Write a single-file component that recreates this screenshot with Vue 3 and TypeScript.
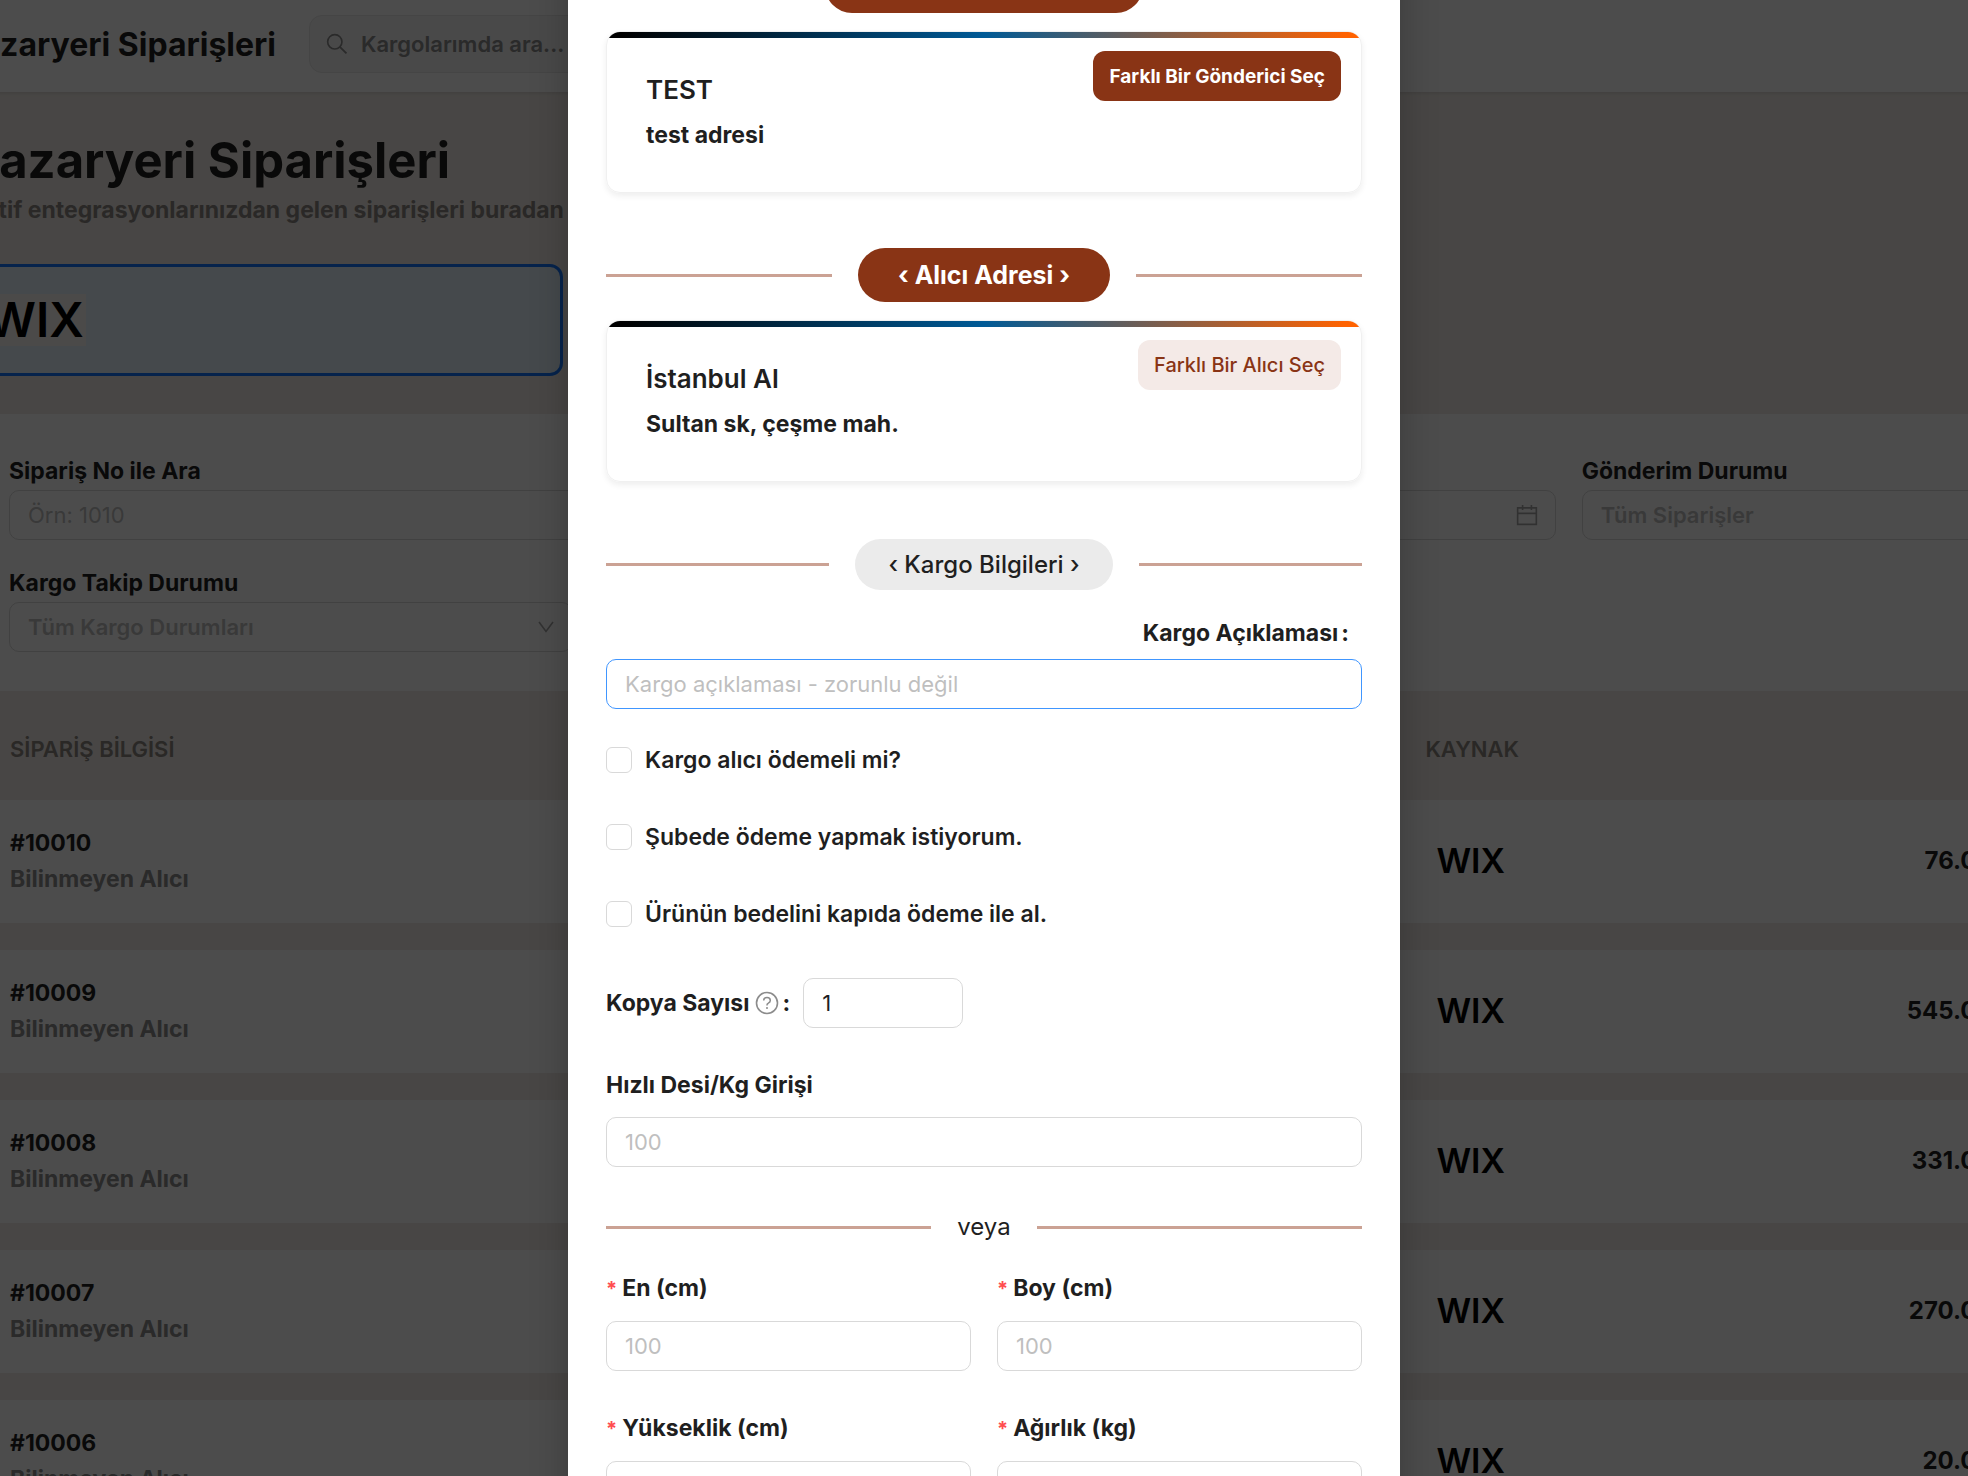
<script setup lang="ts">
import { reactive } from 'vue'

interface Order {
  no: string
  buyer: string
  total: string
}

interface Party {
  heading: string
  name: string
  address: string
  action: string
  tone: 'solid' | 'soft'
}

const orders: Order[] = [
  { no: '#10010', buyer: 'Bilinmeyen Alıcı', total: '76.00 TL' },
  { no: '#10009', buyer: 'Bilinmeyen Alıcı', total: '545.00 TL' },
  { no: '#10008', buyer: 'Bilinmeyen Alıcı', total: '331.00 TL' },
  { no: '#10007', buyer: 'Bilinmeyen Alıcı', total: '270.00 TL' },
  { no: '#10006', buyer: 'Bilinmeyen Alıcı', total: '20.00 TL' },
]

const parties: Party[] = [
  { heading: 'Gönderici Adresi', name: 'TEST', address: 'test adresi', action: 'Farklı Bir Gönderici Seç', tone: 'solid' },
  { heading: 'Alıcı Adresi', name: 'İstanbul Al', address: 'Sultan sk, çeşme mah.', action: 'Farklı Bir Alıcı Seç', tone: 'soft' },
]

const options = [
  { id: 'buyer-pays', label: 'Kargo alıcı ödemeli mi?' },
  { id: 'branch-pays', label: 'Şubede ödeme yapmak istiyorum.' },
  { id: 'cash-on-delivery', label: 'Ürünün bedelini kapıda ödeme ile al.' },
]

const sizes = [
  { id: 'width', label: 'En (cm)' },
  { id: 'length', label: 'Boy (cm)' },
  { id: 'height', label: 'Yükseklik (cm)' },
  { id: 'weight', label: 'Ağırlık (kg)' },
]

const form = reactive({
  note: '',
  checked: [] as string[],
  copies: '1',
  desi: '',
  size: { width: '', length: '', height: '', weight: '' } as Record<string, string>,
})
</script>

<template>
  <div class="screen">
    <div class="page">
      <header class="topbar">
        <div class="topbar-title">Pazaryeri Siparişleri</div>
        <label class="search">
          <svg viewBox="0 0 20 20" width="22" height="22" aria-hidden="true">
            <circle cx="8" cy="8" r="6.5" fill="none" stroke="currentColor" stroke-width="1.5" />
            <path d="M12.8 12.8 18.6 18.6" fill="none" stroke="currentColor" stroke-width="1.7" />
          </svg>
          <input type="search" placeholder="Kargolarımda ara..." aria-label="Kargolarımda ara" />
        </label>
      </header>

      <section class="intro">
        <h1>Pazaryeri Siparişleri</h1>
        <p>Aktif entegrasyonlarınızdan gelen siparişleri buradan yönetebilirsiniz.</p>
        <button type="button" class="market"><span class="wix wix-large">WIX</span></button>
      </section>

      <section class="filters">
        <div class="filter">
          <label for="f-no">Sipariş No ile Ara</label>
          <input id="f-no" type="text" placeholder="Örn: 1010" />
        </div>
        <div class="filter">
          <label for="f-date">Tarih Aralığı</label>
          <div class="date">
            <input id="f-date" type="text" />
            <svg viewBox="0 0 20 20" width="22" height="22" aria-hidden="true">
              <path d="M1.5 3.5h17v15h-17zM1.5 8.5h17M6 1v4.500M14 1v4.500" fill="none" stroke="currentColor" stroke-width="1.5" />
            </svg>
          </div>
        </div>
        <div class="filter">
          <label for="f-ship">Gönderim Durumu</label>
          <div class="select">
            <select id="f-ship"><option>Tüm Siparişler</option></select>
          </div>
        </div>
        <div class="filter narrow">
          <label for="f-track">Kargo Takip Durumu</label>
          <div class="select">
            <select id="f-track"><option>Tüm Kargo Durumları</option></select>
            <svg viewBox="0 0 16 12" width="16" height="12" aria-hidden="true">
              <path d="M1 1l7 9.500L15 1" fill="none" stroke="currentColor" stroke-width="1.600" />
            </svg>
          </div>
        </div>
      </section>

      <table class="orders">
        <colgroup>
          <col class="col-info" />
          <col class="col-source" />
          <col class="col-total" />
          <col />
        </colgroup>
        <thead>
          <tr>
            <th scope="col" class="info">SİPARİŞ BİLGİSİ</th>
            <th scope="col">KAYNAK</th>
            <td></td>
            <td></td>
          </tr>
        </thead>
        <tbody>
          <tr v-for="order in orders" :key="order.no">
            <td class="info">
              <div class="order-no">{{ order.no }}</div>
              <div class="order-buyer">{{ order.buyer }}</div>
            </td>
            <td class="source"><span class="wix">WIX</span></td>
            <td class="total">{{ order.total }}</td>
            <td></td>
          </tr>
        </tbody>
      </table>
    </div>

    <div class="mask">
      <form class="modal" role="dialog" aria-label="Kargo Oluştur" @submit.prevent>
        <template v-for="party in parties" :key="party.heading">
          <div class="divider">
            <h2 class="pill pill-brand">‹ {{ party.heading }} ›</h2>
          </div>
          <article class="card">
            <div class="card-bar"></div>
            <div class="card-body">
              <div class="card-text">
                <h3>{{ party.name }}</h3>
                <p>{{ party.address }}</p>
              </div>
              <button type="button" class="pick" :class="party.tone">{{ party.action }}</button>
            </div>
          </article>
        </template>

        <div class="divider cargo">
          <h2 class="pill pill-plain">‹ Kargo Bilgileri ›</h2>
        </div>

        <div class="note">
          <label class="label" for="note">Kargo Açıklaması<span class="colon">:</span></label>
          <input id="note" v-model="form.note" class="control active" type="text" placeholder="Kargo açıklaması - zorunlu değil" />
        </div>

        <div class="options">
          <label v-for="option in options" :key="option.id" class="option">
            <input v-model="form.checked" type="checkbox" :value="option.id" />
            <span>{{ option.label }}</span>
          </label>
        </div>

        <div class="copies">
          <label class="label" for="copies">Kopya Sayısı</label>
          <svg viewBox="0 0 24 24" width="24" height="24" aria-hidden="true">
            <circle cx="12" cy="12" r="10.500" fill="none" stroke="currentColor" stroke-width="1.600" />
            <path d="M8.700 9.600c0-1.800 1.400-3 3.300-3s3.300 1.200 3.300 2.900c0 1.500-1 2.200-2 2.700-.900.400-1.300.9-1.300 1.700v.6" fill="none" stroke="currentColor" stroke-width="1.500" />
            <circle cx="12" cy="17" r="1" fill="currentColor" />
          </svg>
          <span class="label">:</span>
          <input id="copies" v-model="form.copies" class="control" type="text" inputmode="numeric" />
        </div>

        <div class="field">
          <label class="label" for="desi">Hızlı Desi/Kg Girişi</label>
          <input id="desi" v-model="form.desi" class="control" type="text" placeholder="100" />
        </div>

        <div class="divider or"><span>veya</span></div>

        <div class="sizes">
          <div v-for="size in sizes" :key="size.id" class="field">
            <label class="label" :for="size.id"><span class="star">*</span>{{ size.label }}</label>
            <input :id="size.id" v-model="form.size[size.id]" class="control" type="text" placeholder="100" />
          </div>
        </div>
      </form>
    </div>
  </div>
</template>

<style>
body {
  margin: 0;
}
</style>

<style scoped>
.screen {
  position: relative;
  height: 100vh;
  overflow: hidden;
  background: #f1ece6;
  color: #1f1f1f;
  font-family: Inter, "Liberation Sans", sans-serif;
  font-size: 22px;
}

.screen *,
.screen *::before,
.screen *::after {
  box-sizing: border-box;
}

h1,
h2,
h3,
p {
  margin: 0;
}

input,
select,
button {
  font: inherit;
  color: inherit;
  margin: 0;
  outline: none;
}

/* The page behind the dialog is scrolled a little to the right. */
.page {
  width: 122%;
  margin-left: -32px;
}

.topbar {
  display: flex;
  align-items: center;
  height: 92px;
  padding-bottom: 4px;
  background: #ffffff;
  box-shadow: 0 1px 4px rgba(0, 0, 0, 0.12);
}

.topbar-title {
  display: flex;
  justify-content: flex-end;
  width: 308px;
  font-size: 32px;
  font-weight: 700;
  white-space: nowrap;
}

.search {
  display: flex;
  align-items: center;
  gap: 13px;
  width: 420px;
  height: 58px;
  margin-left: 33px;
  padding: 0 16px;
  border: 1px solid #e6e6e6;
  border-radius: 13px;
  background: #f5f5f5;
  color: #8c8c8c;
}

.search input {
  flex: 1;
  min-width: 0;
  padding: 0;
  border: 0;
  background: transparent;
  font-weight: 600;
}

.search input::placeholder {
  color: #8c8c8c;
}

.intro {
  height: 322px;
  padding: 37px 0 0;
}

h1 {
  font-size: 49px;
  font-weight: 700;
  line-height: 64px;
  white-space: nowrap;
}

.intro p {
  color: #8c8883;
  font-size: 23px;
  font-weight: 700;
  line-height: 34px;
  white-space: nowrap;
}

.market {
  display: flex;
  align-items: center;
  width: 595px;
  height: 112px;
  margin-top: 37px;
  padding: 0 0 0 14px;
  border: 3px solid #1677ff;
  border-radius: 13px;
  background: #e6f4ff;
}

.wix {
  color: #000000;
  font-size: 34px;
  font-weight: 600;
  line-height: 1;
}

.wix-large {
  padding: 2px;
  background: #faf7f4;
  font-size: 48px;
}

.filters {
  display: grid;
  grid-template-columns: repeat(3, 1fr);
  gap: 26px;
  padding: 40px 27px 39px 41px;
  background: #ffffff;
}

.filter {
  display: flex;
  flex-direction: column;
  gap: 2px;
}

.filter label {
  font-size: 23px;
  font-weight: 700;
  line-height: 34px;
}

.filter input,
.filter select {
  width: 100%;
  height: 50px;
  padding: 0 18px;
  border: 1px solid #d9d9d9;
  border-radius: 10px;
  background: transparent;
  appearance: none;
}

.filter input::placeholder {
  color: #bfbfbf;
}

.filter select {
  color: #bfbfbf;
  font-weight: 600;
}

.narrow {
  width: 563px;
}

.date,
.select {
  position: relative;
  display: flex;
}

.date svg,
.select svg {
  position: absolute;
  top: 50%;
  right: 18px;
  transform: translateY(-50%);
  color: #a6a6a6;
}

.orders {
  width: 100%;
  border-collapse: separate;
  border-spacing: 0 27px;
  table-layout: fixed;
}

.col-info {
  width: 60.7%;
}

.col-source {
  width: 13%;
}

.col-total {
  width: 12.1%;
}

.orders th {
  height: 55px;
  padding: 6px 0 0;
  color: #8c8680;
  font-weight: 600;
  text-align: left;
}

.orders th.info,
.orders td.info {
  padding-left: 42px;
}

.orders tbody td {
  height: 123px;
  padding: 0 0 2px;
  background: #ffffff;
}

.orders .order-no,
.orders .order-buyer {
  font-size: 23px;
  font-weight: 700;
  line-height: 36px;
}

.orders .order-buyer {
  color: #8c8c8c;
}

.orders tbody .source {
  padding-left: 11px;
}

.orders .total {
  font-size: 24px;
  font-weight: 700;
  text-align: right;
}

.mask {
  position: absolute;
  inset: 0;
  overflow: hidden;
  background: rgba(0, 0, 0, 0.7);
}

/* Dialog body, scrolled past its first heading. */
.modal {
  width: 832px;
  max-width: 100%;
  margin: -79px auto 0;
  padding: 38px;
  background: #ffffff;
  box-shadow: 0 0 36px rgba(0, 0, 0, 0.24);
}

.divider {
  display: flex;
  align-items: center;
  gap: 26px;
}

.divider::before,
.divider::after {
  content: "";
  flex: 1;
  height: 3px;
  background: #cba294;
}

.pill {
  border-radius: 27px;
  white-space: nowrap;
}

.pill-brand {
  padding: 0 40px;
  background: #893415;
  color: #ffffff;
  font-size: 25px;
  font-weight: 700;
  line-height: 54px;
}

.pill-plain {
  padding: 0 33px;
  background: #ebebeb;
  font-size: 24px;
  font-weight: 500;
  line-height: 51px;
}

.cargo {
  margin-top: 57px;
}

.card {
  margin: 18px 0 55px;
  overflow: hidden;
  border: 1px solid #f0f0f0;
  border-radius: 14px;
  box-shadow: 0 3px 6px rgba(0, 0, 0, 0.07);
}

.card-bar {
  height: 6px;
  background: linear-gradient(90deg, #000000 2%, #005a96 50%, #ff6200 98%);
}

.card-body {
  display: flex;
  align-items: flex-start;
  justify-content: space-between;
  padding: 13px 20px 40px 39px;
}

.card-text {
  display: grid;
  gap: 11px;
  padding-top: 22px;
  line-height: 34px;
}

.card-text h3 {
  font-size: 26px;
  font-weight: 600;
}

.card-text p {
  font-size: 23px;
  font-weight: 700;
}

.pick {
  height: 50px;
  padding: 0 16px;
  border: 0;
  border-radius: 12px;
}

.pick.solid {
  background: #893415;
  color: #ffffff;
  font-size: 19px;
  font-weight: 700;
}

.pick.soft {
  background: #f4eae7;
  color: #893415;
  font-size: 20px;
  font-weight: 500;
}

.label {
  font-size: 23px;
  font-weight: 700;
  line-height: 34px;
}

.control {
  width: 100%;
  height: 50px;
  padding: 0 18px;
  border: 1px solid #d9d9d9;
  border-radius: 10px;
  background: #ffffff;
}

.control::placeholder {
  color: #bfbfbf;
  opacity: 1;
}

.control.active {
  border-color: #4096ff;
}

.note {
  display: grid;
  gap: 9px;
  margin-top: 26px;
}

.note .label {
  justify-self: end;
  padding-right: 13px;
}

.colon {
  padding-left: 3px;
}

.options {
  display: grid;
  gap: 27px;
  margin-top: 26px;
}

.option {
  display: flex;
  align-items: center;
  gap: 13px;
  height: 50px;
  font-size: 23px;
  font-weight: 600;
}

.option input {
  width: 26px;
  height: 26px;
  border: 1px solid #d9d9d9;
  border-radius: 6px;
  background: #ffffff;
  appearance: none;
}

.copies {
  display: flex;
  align-items: center;
  margin-top: 39px;
}

.copies svg {
  margin: 0 3px 0 6px;
  color: #8c8c8c;
}

.copies .control {
  width: 160px;
  margin-left: 13px;
}

.field {
  display: grid;
  gap: 15px;
}

.copies + .field {
  margin-top: 40px;
}

.or {
  margin: 43px 0 27px;
  font-size: 24px;
  line-height: 34px;
}

.sizes {
  display: grid;
  grid-template-columns: 1fr 1fr;
  gap: 40px 26px;
}

.star {
  padding-right: 5px;
  color: #ff4d4f;
  font-size: 20px;
}
</style>
